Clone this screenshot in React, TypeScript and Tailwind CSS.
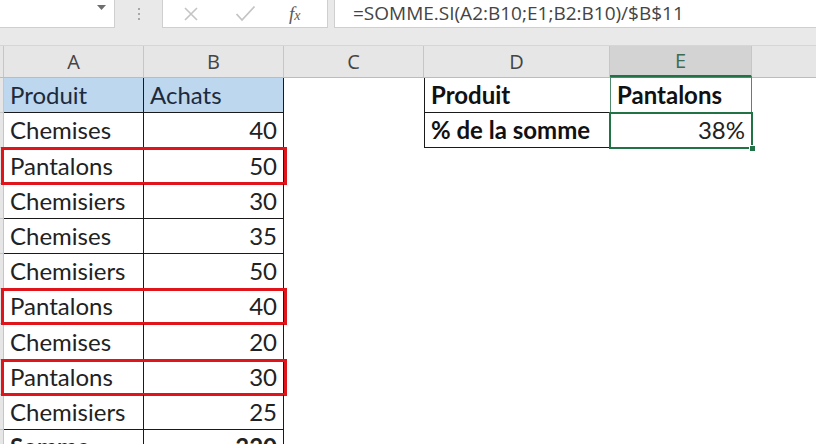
import type { ReactNode } from 'react'

type Row = { name: string; qty: number; mark?: boolean }

const rows: Row[] = [
  { name: 'Chemises', qty: 40 },
  { name: 'Pantalons', qty: 50, mark: true },
  { name: 'Chemisiers', qty: 30 },
  { name: 'Chemises', qty: 35 },
  { name: 'Chemisiers', qty: 50 },
  { name: 'Pantalons', qty: 40, mark: true },
  { name: 'Chemises', qty: 20 },
  { name: 'Pantalons', qty: 30, mark: true },
  { name: 'Chemisiers', qty: 25 },
]

const total = rows.reduce((s, r) => s + r.qty, 0)

const cellFont = "font-['Lato',sans-serif] text-[24px] leading-none"

function FormulaBar() {
  return (
    <div className="flex h-[45px] bg-[#e9e9e9]">
      {/* name box */}
      <div className="relative h-[28px] w-[115px] bg-white border-r border-b border-[#cfcfcf]">
        <svg className="absolute left-[97px] top-[5px]" width="9" height="5" viewBox="0 0 9 5">
          <polygon points="0,0 9,0 4.5,5" fill="#6e6e6e" />
        </svg>
      </div>
      <div className="flex w-[47px] h-[28px] flex-col items-center justify-center gap-[3px]">
        <span className="h-[2px] w-[2px] bg-[#a8a8a8]" />
        <span className="h-[2px] w-[2px] bg-[#a8a8a8]" />
        <span className="h-[2px] w-[2px] bg-[#a8a8a8]" />
      </div>
      {/* cancel / enter / insert function */}
      <div className="flex h-[28px] w-[166px] items-center bg-white border-x border-b border-[#cfcfcf]">
        <svg className="ml-[20px]" width="16" height="16" viewBox="0 0 16 16">
          <path d="M2 2 L14 14 M14 2 L2 14" stroke="#c4c4c4" strokeWidth="1.6" fill="none" />
        </svg>
        <svg className="ml-[36px]" width="21" height="17" viewBox="0 0 21 17">
          <path d="M1.5 9 L7 15 L19.5 1.5" stroke="#c4c4c4" strokeWidth="1.8" fill="none" />
        </svg>
        <span className="ml-[33px] font-['Liberation_Serif',serif] italic text-[19px] leading-none text-[#5a5a5a]">
          f<span className="text-[14px]">x</span>
        </span>
      </div>
      <div className="ml-[6px] flex h-[28px] flex-1 items-center bg-white border-l border-b border-[#cfcfcf] pl-[18px]">
        <span className="font-['Open_Sans',sans-serif] text-[19px] leading-none text-[#444]">
          =SOMME.SI(A2:B10;E1;B2:B10)/$B$11
        </span>
      </div>
    </div>
  )
}

function ColHead({ w, label, active }: { w: string; label: string; active?: boolean }) {
  return (
    <div
      className={`${w} flex items-center justify-center border-r border-[#c6c6c6] font-['Open_Sans',sans-serif] text-[20px] leading-none ${
        active ? 'bg-[#d3d3d3] text-[#3d6b52] border-b-2 border-b-[#217346]' : 'text-[#444]'
      }`}
    >
      {label}
    </div>
  )
}

function Cell({
  w,
  children,
  className = '',
}: {
  w: string
  children?: ReactNode
  className?: string
}) {
  return <div className={`${w} flex items-end px-[6px] pb-[5px] ${cellFont} ${className}`}>{children}</div>
}

function SheetRow({
  index,
  a,
  b,
  mark,
  head,
  bold,
  d,
}: {
  index: number
  a: string
  b: string
  mark?: boolean
  head?: boolean
  bold?: boolean
  d?: ReactNode
}) {
  return (
    <div className="flex h-[35.2px]">
      <div className="w-[4px] bg-[#e6e6e6] border-r border-b border-[#c6c6c6]" />
      <div className="relative flex">
        <Cell
          w="w-[140px]"
          className={`border-r border-b border-[#1a1a1a] ${head ? 'bg-[#bdd7ee] text-[#1b2a3d]' : 'text-[#222]'} ${bold ? 'font-bold' : ''}`}
        >
          {a}
        </Cell>
        <Cell
          w="w-[140px]"
          className={`border-r border-b border-[#1a1a1a] ${head ? 'bg-[#bdd7ee] text-[#1b2a3d]' : 'justify-end text-[#222]'} ${bold ? 'font-bold' : ''}`}
        >
          {b}
        </Cell>
        {mark && (
          <div className="pointer-events-none absolute -left-[3px] -right-[3px] -top-[1px] -bottom-[1px] border-[3px] border-[#e0141b]" />
        )}
      </div>
      <div className="w-[140px]" />
      {index <= 2 ? d : null}
    </div>
  )
}

export default function App() {
  return (
    <div className="h-[444px] w-[816px] overflow-hidden bg-white">
      <FormulaBar />
      {/* column headers */}
      <div className="flex h-[33px] bg-[#e6e6e6] border-t border-[#d6d6d6] border-b border-b-[#bcbcbc]">
        <div className="w-[4px] border-r border-[#c6c6c6]" />
        <ColHead w="w-[140px]" label="A" />
        <ColHead w="w-[140px]" label="B" />
        <ColHead w="w-[140px]" label="C" />
        <ColHead w="w-[186px]" label="D" />
        <ColHead w="w-[142px]" label="E" active />
        <div className="flex-1" />
      </div>

      <SheetRow
        index={1}
        a="Produit"
        b="Achats"
        head
        d={
          <>
            <Cell w="w-[186px]" className="font-bold text-[#111] border-l border-b border-[#1a1a1a]">
              Produit
            </Cell>
            <div className="relative">
              <Cell w="w-[142px]" className="h-full font-bold text-[#111] border-l border-r border-b border-[#1a1a1a]">
                Pantalons
              </Cell>
              <div className="absolute inset-x-0 -top-px bottom-0 border border-[#4f8b6b]" />
            </div>
          </>
        }
      />
      <SheetRow
        index={2}
        a={rows[0].name}
        b={String(rows[0].qty)}
        d={
          <>
            <Cell w="w-[186px]" className="font-bold text-[#111] border-l border-b border-[#1a1a1a]">
              % de la somme
            </Cell>
            <div className="relative">
              <Cell w="w-[142px]" className="h-full justify-end text-[#222] border-l border-r border-b border-[#1a1a1a]">
                38%
              </Cell>
              <div className="absolute -inset-[1px] border-2 border-[#217346]" />
              <div className="absolute -right-[4px] -bottom-[4px] h-[7px] w-[7px] bg-[#217346] border border-white" />
            </div>
          </>
        }
      />
      {rows.slice(1).map((r, i) => (
        <SheetRow key={i} index={i + 3} a={r.name} b={String(r.qty)} mark={r.mark} />
      ))}
      <SheetRow index={11} a="Somme" b={String(total)} bold />
    </div>
  )
}
